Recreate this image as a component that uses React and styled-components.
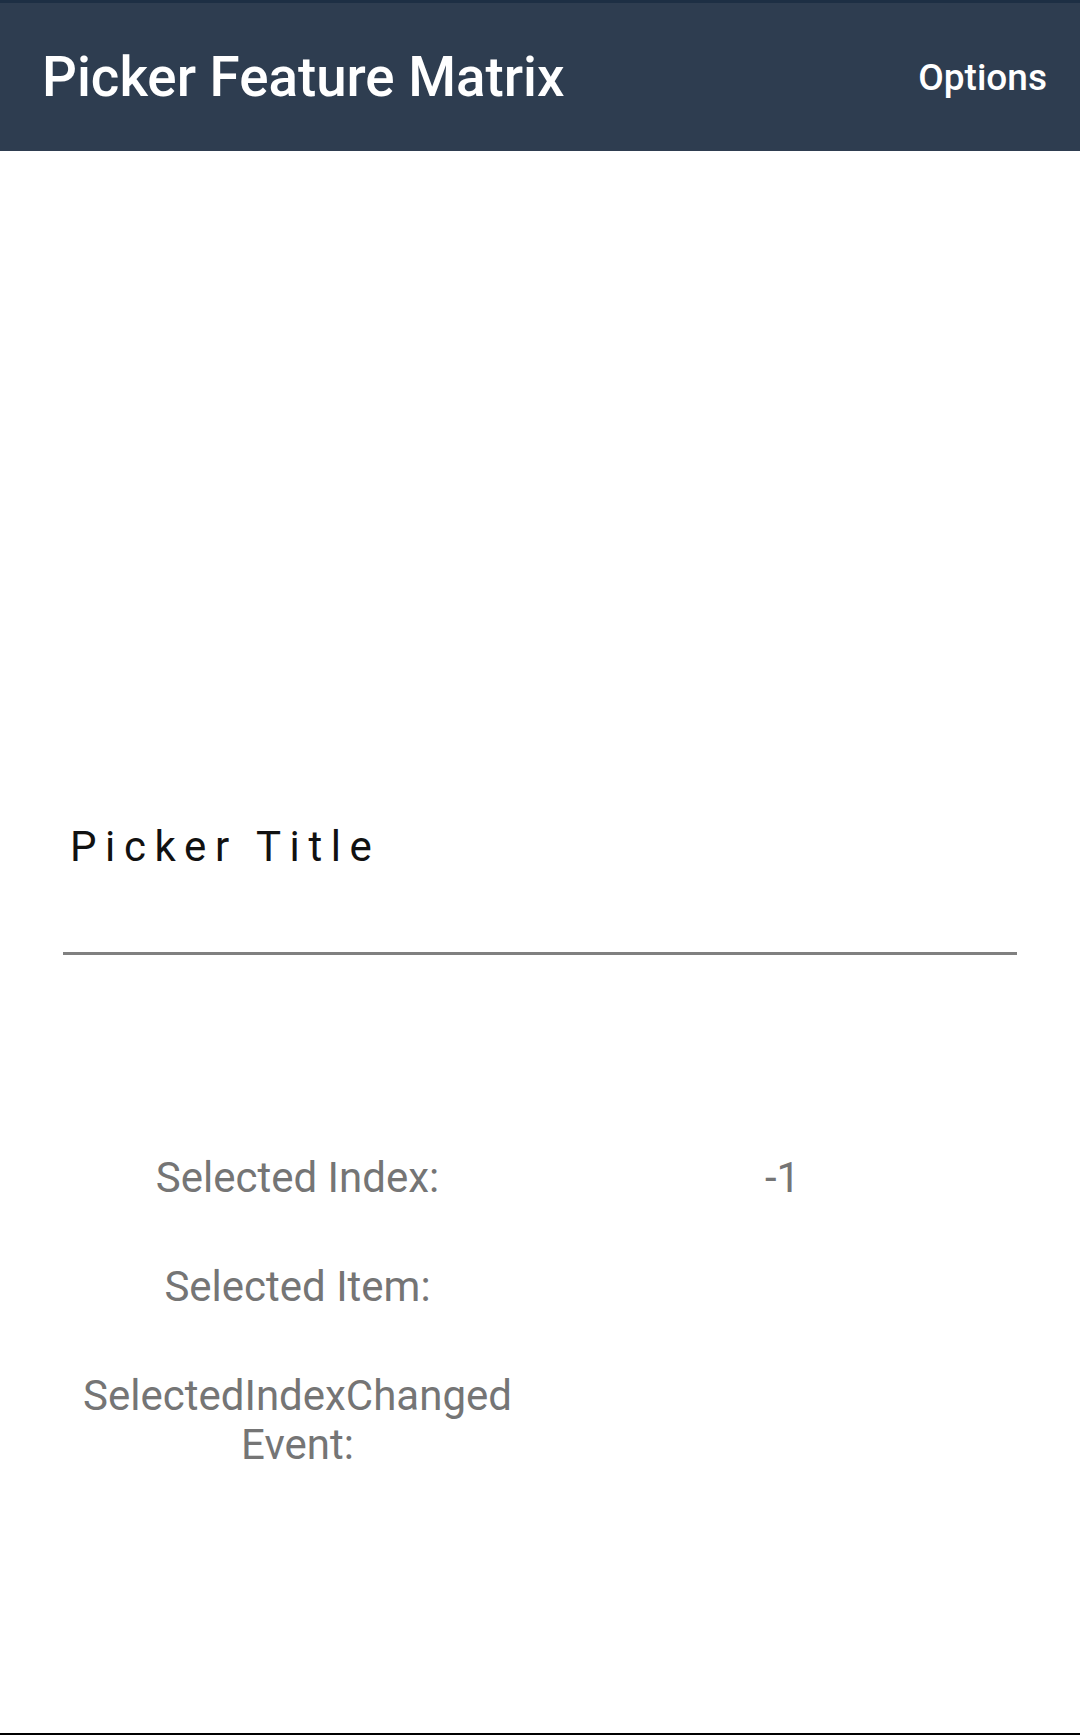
import React from 'react';
import styled, { createGlobalStyle } from 'styled-components';

const GlobalStyle = createGlobalStyle`
  html, body {
    margin: 0;
    padding: 0;
    background: #ffffff;
  }
  body {
    font-family: Roboto, 'Noto Sans', sans-serif;
  }
`;

const Page = styled.div`
  width: 1080px;
  height: 1735px;
  display: flex;
  flex-direction: column;
  background: #ffffff;
  border-bottom: 2px solid #000000;
  box-sizing: border-box;
`;

const ActionBar = styled.header`
  height: 151px;
  box-sizing: border-box;
  border-top: 3px solid #1d2f44;
  background: #2e3d50;
  display: flex;
  align-items: center;
  justify-content: space-between;
  padding: 0 33px 0 42px;
  color: #ffffff;
`;

const BarTitle = styled.h1`
  margin: 0;
  font-size: 54.7px;
  font-weight: 500;
  line-height: 1;
`;

const BarAction = styled.span`
  font-size: 37px;
  font-weight: 500;
  line-height: 1;
`;

const Content = styled.main`
  display: flex;
  flex-direction: column;
  padding: 0 63px;
`;

const PickerField = styled.div`
  margin-top: 671px;
  padding: 0 0 80px 7px;
  border-bottom: 3px solid #808080;
`;

const PickerTitle = styled.span`
  display: block;
  font-size: 42px;
  line-height: 50px;
  letter-spacing: 0.205em;
  color: #111111;
`;

const Results = styled.div`
  display: grid;
  grid-template-columns: 1fr 1fr;
  row-gap: 60px;
  margin: 198px -8px 0;
`;

const Cell = styled.div`
  font-size: 42px;
  line-height: 49px;
  color: #757575;
  text-align: center;
`;

const rows = [
  { label: 'Selected Index:', value: '-1' },
  { label: 'Selected Item:', value: '' },
  { label: <>SelectedIndexChanged<br />Event:</>, value: '' },
];

export default function App() {
  return (
    <>
      <GlobalStyle />
      <Page>
        <ActionBar>
          <BarTitle>Picker Feature Matrix</BarTitle>
          <BarAction>Options</BarAction>
        </ActionBar>
        <Content>
          <PickerField>
            <PickerTitle>Picker Title</PickerTitle>
          </PickerField>
          <Results>
            {rows.map((r, i) => (
              <React.Fragment key={i}>
                <Cell>{r.label}</Cell>
                <Cell>{r.value}</Cell>
              </React.Fragment>
            ))}
          </Results>
        </Content>
      </Page>
    </>
  );
}
